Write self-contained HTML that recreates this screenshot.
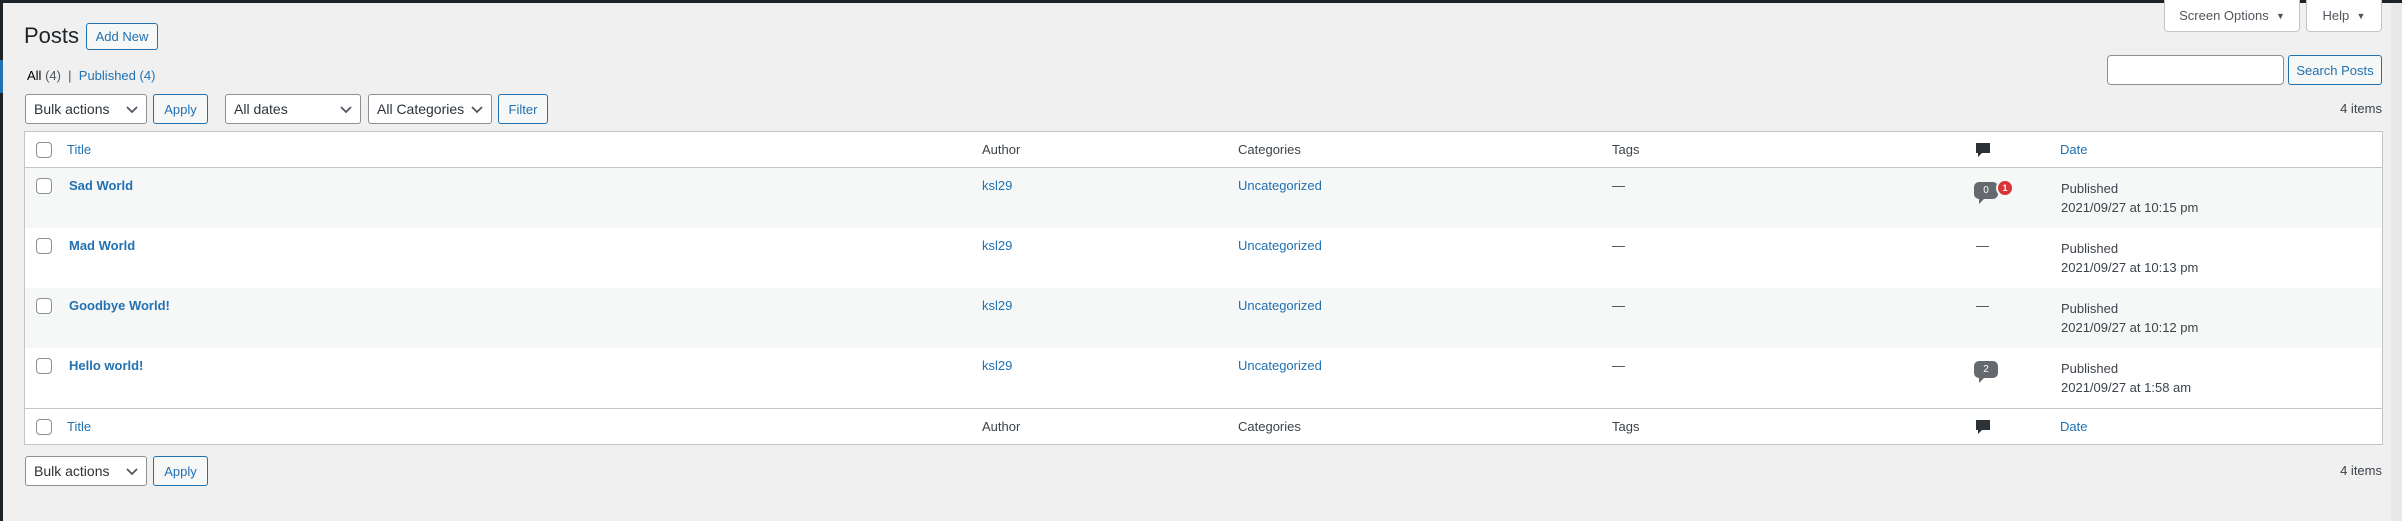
<!DOCTYPE html>
<html><head><meta charset="utf-8"><style>
*{box-sizing:border-box;margin:0;padding:0}
body{width:2402px;height:521px;background:#f0f0f1;font-family:"Liberation Sans",sans-serif;font-size:13px;color:#3c434a;position:relative;overflow:hidden}
.a{position:absolute}
.btn{position:absolute;border:1px solid #2271b1;color:#2271b1;background:#f6f7f7;border-radius:3px;display:flex;align-items:center;justify-content:center;font-size:13px}
.sel{position:absolute;border:1px solid #8c8f94;background:#fff;border-radius:3px;color:#2c3338;font-size:14px;display:flex;align-items:center;padding-left:8px}
.sel svg{position:absolute;right:8px;top:11px}
.lnk{color:#2271b1}
.row{position:absolute;left:25px;width:2357px;height:60px}
.cb{position:absolute;left:11px;width:16px;height:16px;border:1px solid #8c8f94;border-radius:4px;background:#fff}
.t{position:absolute;white-space:nowrap}
.bub{position:absolute;background:#646970;color:#fff;border-radius:5px;font-size:10px;width:24px;height:17px;text-align:center;line-height:17px}
.bub:after{content:"";position:absolute;left:5px;bottom:-5px;border-left:5px solid #646970;border-bottom:5px solid transparent}
</style></head><body>
<div class="a" style="left:2391px;top:0;width:11px;height:521px;background:#e8e8e9"></div>
<div class="a" style="left:0;top:0;width:2402px;height:3px;background:#1d2327"></div>
<div class="a" style="left:0;top:0;width:3px;height:521px;background:#1d2327"></div>
<div class="a" style="left:0;top:60px;width:3px;height:33px;background:#2271b1"></div>

<div class="a" style="left:2164px;top:0;width:136px;height:32px;background:#fff;border:1px solid #c3c4c7;border-top:none;border-radius:0 0 4px 4px;color:#50575e;display:flex;align-items:center;justify-content:center">Screen Options&nbsp;&nbsp;<span style="font-size:9px">▼</span></div>
<div class="a" style="left:2306px;top:0;width:76px;height:32px;background:#fff;border:1px solid #c3c4c7;border-top:none;border-radius:0 0 4px 4px;color:#50575e;display:flex;align-items:center;justify-content:center">Help&nbsp;&nbsp;<span style="font-size:9px">▼</span></div>

<div class="t" style="left:24px;top:23px;font-size:22px;color:#1d2327">Posts</div>
<div class="btn" style="left:86px;top:23px;width:72px;height:27px">Add New</div>
<div class="t" style="left:27px;top:68px;color:#50575e"><span style="color:#000">All</span> (4) &nbsp;|&nbsp; <span class="lnk">Published</span> <span class="lnk">(4)</span></div>

<div class="a" style="left:2107px;top:55px;width:177px;height:30px;background:#fff;border:1px solid #8c8f94;border-radius:4px"></div>
<div class="btn" style="left:2288px;top:55px;width:94px;height:30px">Search Posts</div>

<div class="sel" style="left:25px;top:94px;width:122px;height:30px">Bulk actions<svg width="12" height="8"><path d="M1 1l5 5 5-5" stroke="#50575e" stroke-width="1.8" fill="none"/></svg></div>
<div class="btn" style="left:153px;top:94px;width:55px;height:30px">Apply</div>
<div class="sel" style="left:225px;top:94px;width:136px;height:30px">All dates<svg width="12" height="8"><path d="M1 1l5 5 5-5" stroke="#50575e" stroke-width="1.8" fill="none"/></svg></div>
<div class="sel" style="left:368px;top:94px;width:124px;height:30px">All Categories<svg width="12" height="8"><path d="M1 1l5 5 5-5" stroke="#50575e" stroke-width="1.8" fill="none"/></svg></div>
<div class="btn" style="left:498px;top:94px;width:50px;height:30px">Filter</div>
<div class="t" style="right:20px;top:101px;color:#3c434a">4 items</div>

<div class="a" style="left:24px;top:131px;width:2359px;height:314px;border:1px solid #c3c4c7;background:#fff"></div>

<div class="row" style="top:132px;height:36px;border-bottom:1px solid #c3c4c7;background:#fff">
<div class="cb" style="top:10px"></div>
<div class="t lnk" style="left:42px;top:10px">Title</div>
<div class="t" style="left:957px;top:10px">Author</div>
<div class="t" style="left:1213px;top:10px">Categories</div>
<div class="t" style="left:1587px;top:10px">Tags</div>
<svg class="a" style="left:1951px;top:11px" width="14" height="15"><path d="M0 0h14v10h-8l-4 4v-4h-2z" fill="#2c3338"/></svg>
<div class="t lnk" style="left:2035px;top:10px">Date</div>
</div>

<div class="row" style="top:168px;background:#f6f7f7">
<div class="cb" style="top:10px"></div>
<div class="t lnk" style="left:44px;top:10px;font-weight:bold">Sad World</div>
<div class="t lnk" style="left:957px;top:10px">ksl29</div>
<div class="t lnk" style="left:1213px;top:10px">Uncategorized</div>
<div class="t" style="left:1587px;top:10px">—</div>
<div class="bub" style="left:1949px;top:14px">0</div>
<div class="a" style="left:1971px;top:11px;width:18px;height:18px;border-radius:50%;background:#d63638;border:2px solid #f6f7f7;color:#fff;font-size:9px;text-align:center;line-height:14px;font-weight:bold">1</div>
<div class="t" style="left:2036px;top:11px;line-height:19px">Published<br>2021/09/27 at 10:15 pm</div>
</div>

<div class="row" style="top:228px;background:#fff">
<div class="cb" style="top:10px"></div>
<div class="t lnk" style="left:44px;top:10px;font-weight:bold">Mad World</div>
<div class="t lnk" style="left:957px;top:10px">ksl29</div>
<div class="t lnk" style="left:1213px;top:10px">Uncategorized</div>
<div class="t" style="left:1587px;top:10px">—</div>
<div class="t" style="left:1951px;top:10px">—</div>
<div class="t" style="left:2036px;top:11px;line-height:19px">Published<br>2021/09/27 at 10:13 pm</div>
</div>

<div class="row" style="top:288px;background:#f6f7f7">
<div class="cb" style="top:10px"></div>
<div class="t lnk" style="left:44px;top:10px;font-weight:bold">Goodbye World!</div>
<div class="t lnk" style="left:957px;top:10px">ksl29</div>
<div class="t lnk" style="left:1213px;top:10px">Uncategorized</div>
<div class="t" style="left:1587px;top:10px">—</div>
<div class="t" style="left:1951px;top:10px">—</div>
<div class="t" style="left:2036px;top:11px;line-height:19px">Published<br>2021/09/27 at 10:12 pm</div>
</div>

<div class="row" style="top:348px;background:#fff">
<div class="cb" style="top:10px"></div>
<div class="t lnk" style="left:44px;top:10px;font-weight:bold">Hello world!</div>
<div class="t lnk" style="left:957px;top:10px">ksl29</div>
<div class="t lnk" style="left:1213px;top:10px">Uncategorized</div>
<div class="t" style="left:1587px;top:10px">—</div>
<div class="bub" style="left:1949px;top:13px">2</div>
<div class="t" style="left:2036px;top:11px;line-height:19px">Published<br>2021/09/27 at 1:58 am</div>
</div>

<div class="row" style="top:408px;height:36px;border-top:1px solid #c3c4c7;background:#fff">
<div class="cb" style="top:10px"></div>
<div class="t lnk" style="left:42px;top:10px">Title</div>
<div class="t" style="left:957px;top:10px">Author</div>
<div class="t" style="left:1213px;top:10px">Categories</div>
<div class="t" style="left:1587px;top:10px">Tags</div>
<svg class="a" style="left:1951px;top:11px" width="14" height="15"><path d="M0 0h14v10h-8l-4 4v-4h-2z" fill="#2c3338"/></svg>
<div class="t lnk" style="left:2035px;top:10px">Date</div>
</div>

<div class="sel" style="left:25px;top:456px;width:122px;height:30px">Bulk actions<svg width="12" height="8"><path d="M1 1l5 5 5-5" stroke="#50575e" stroke-width="1.8" fill="none"/></svg></div>
<div class="btn" style="left:153px;top:456px;width:55px;height:30px">Apply</div>
<div class="t" style="right:20px;top:463px">4 items</div>
</body></html>
